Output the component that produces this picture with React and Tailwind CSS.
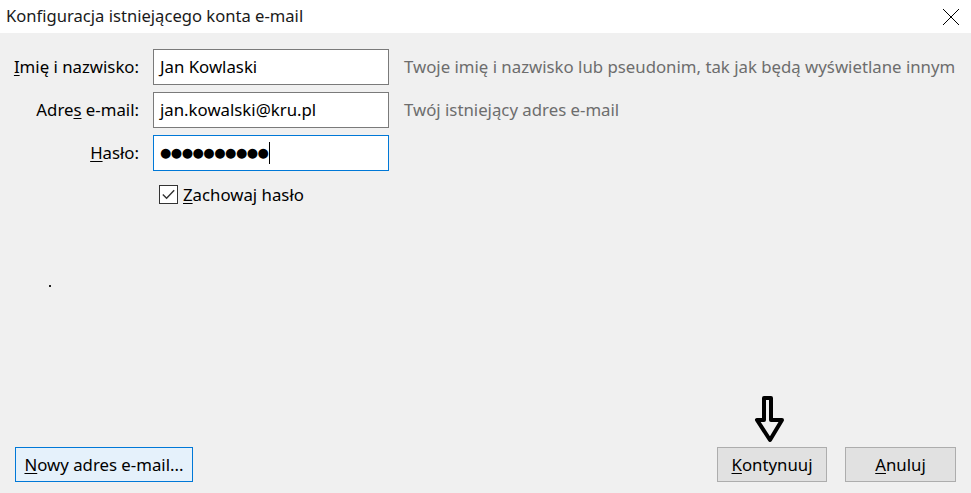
import { useState } from "react";

const font = { fontFamily: '"Segoe UI", "Noto Sans", "DejaVu Sans", sans-serif' };

const Key = ({ children }) => <span className="underline underline-offset-2">{children}</span>;

const App = () => {
  const [keep, setKeep] = useState(true);

  return (
    <div className="relative flex h-[493px] w-[971px] flex-col bg-[#f0f0f0] text-[16.8px] text-black" style={font}>
      {/* Title bar */}
      <div className="flex h-[33px] items-center justify-between bg-white pl-[6px] pr-[11px]">
        <span className="text-[16.6px] text-[#1a1a1a]">Konfiguracja istniejącego konta e-mail</span>
        <svg width="18" height="18" viewBox="0 0 18 18" className="text-black">
          <path d="M1 1L17 17M17 1L1 17" stroke="currentColor" strokeWidth="1" />
        </svg>
      </div>

      {/* Form */}
      <div className="grid grid-cols-[139px_236px_auto] items-center gap-x-[14px] gap-y-[7px] pt-[16px]">
        <label className="whitespace-nowrap text-right">
          <Key>I</Key>mię i nazwisko:
        </label>
        <div className="flex h-[36px] items-center border border-[#7a7a7a] bg-white px-[6px]">Jan Kowlaski</div>
        <span className="whitespace-nowrap pl-[1px] text-[#6d6d6d]">Twoje imię i nazwisko lub pseudonim, tak jak będą wyświetlane innym</span>

        <label className="whitespace-nowrap text-right">
          Adre<Key>s</Key> e-mail:
        </label>
        <div className="flex h-[36px] items-center border border-[#7a7a7a] bg-white px-[6px]">jan.kowalski@kru.pl</div>
        <span className="pl-[1px] text-[#6d6d6d]">Twój istniejący adres e-mail</span>

        <label className="text-right">
          <Key>H</Key>asło:
        </label>
        <div className="flex h-[36px] items-center border border-[#0078d7] bg-white px-[6px]">
          <span className="text-[13px] font-bold tracking-[-0.5px]">●●●●●●●●●●</span>
          <span className="ml-[1px] h-[22px] w-px bg-black" />
        </div>
        <span />

        <span />
        <label className="mt-[4px] flex items-center gap-[5px] pl-[6px]" onClick={() => setKeep(!keep)}>
          <span className="flex h-[19px] w-[19px] items-center justify-center border border-[#333] bg-white">
            {keep && (
              <svg width="13" height="11" viewBox="0 0 13 11">
                <path d="M0.8 5.5L4.6 9.3L12.2 1.2" stroke="#333" strokeWidth="1.4" fill="none" />
              </svg>
            )}
          </span>
          <span>
            <Key>Z</Key>achowaj hasło
          </span>
        </label>
        <span />
      </div>

      <div className="ml-[49px] mt-[78px] h-[2px] w-[2px] bg-[#222]" />

      {/* Buttons */}
      <div className="mt-auto flex items-center pb-[11px] pl-[15px] pr-[15px]">
        <button className="h-[35px] w-[178px] border border-[#0078d7] bg-[#e5f1fb]">
          <Key>N</Key>owy adres e-mail...
        </button>
        <button className="ml-auto h-[35px] w-[110px] border border-[#adadad] bg-[#e1e1e1]">
          <Key>K</Key>ontynuuj
        </button>
        <button className="ml-[18px] h-[35px] w-[111px] border border-[#adadad] bg-[#e1e1e1]">
          <Key>A</Key>nuluj
        </button>
      </div>

      {/* Annotation arrow over the dialog */}
      <svg className="absolute left-[752px] top-[392px]" width="36" height="54" viewBox="0 0 36 54">
        <path
          d="M12 6H19V28H30L18 48L5 28H12Z"
          fill="none"
          stroke="black"
          strokeWidth="4"
          strokeLinejoin="round"
        />
      </svg>
    </div>
  );
};

export default App;
